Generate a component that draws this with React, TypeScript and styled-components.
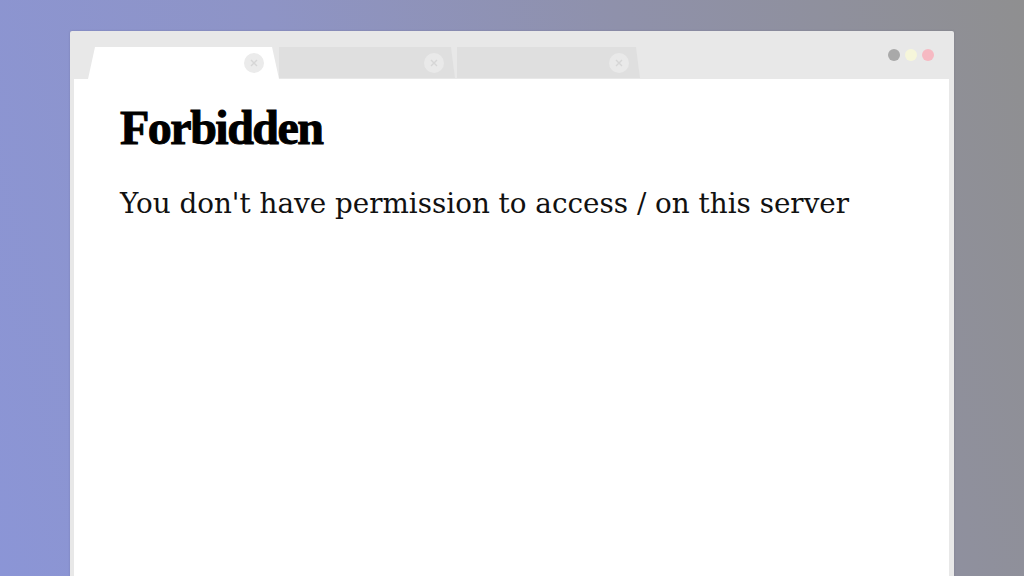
import React from "react";
import styled, { createGlobalStyle } from "styled-components";

const Global = createGlobalStyle`
  html, body { margin: 0; padding: 0; height: 100%; }
  body {
    overflow: hidden;
    background: linear-gradient(75deg, #8b95d6 0%, #8e94c6 35%, #8f91ab 65%, #8f8f90 100%);
  }
  #root { height: 100%; }
`;

const Stage = styled.div`
  width: 1024px;
  height: 576px;
  padding: 31px 70px 0 70px;
  box-sizing: border-box;
  overflow: hidden;
`;

const Frame = styled.div`
  width: 884px;
  height: 560px;
  background: #e8e8e8;
  border-radius: 2px 2px 0 0;
  box-shadow: 0 0 2px rgba(80, 80, 110, 0.35);
  padding: 0 5px 0 4px;
  box-sizing: border-box;
  display: flex;
  flex-direction: column;
`;

const TopBar = styled.div`
  height: 48px;
  display: flex;
  align-items: flex-end;
  justify-content: space-between;
  padding: 0 15px 0 14px;
`;

const Tabs = styled.div`
  display: flex;
  align-items: flex-end;
  height: 32px;
`;

const Tab = styled.div<{ $active?: boolean; $w: number }>`
  position: relative;
  width: ${(p) => p.$w}px;
  height: ${(p) => (p.$active ? 32 : 31)}px;
  background: ${(p) => (p.$active ? "#ffffff" : "#dfdfdf")};
  clip-path: ${(p) =>
    p.$active
      ? "polygon(7px 0, calc(100% - 7px) 0, 100% 100%, 0 100%)"
      : "polygon(0 0, calc(100% - 4px) 0, 100% 100%, 0 100%)"};
  margin-right: ${(p) => (p.$active ? 0 : 2)}px;
  align-self: flex-start;
`;

const Close = styled.span<{ $active?: boolean }>`
  position: absolute;
  right: ${(p) => (p.$active ? 15 : 11)}px;
  top: 6px;
  width: 20px;
  height: 20px;
  border-radius: 50%;
  background: ${(p) => (p.$active ? "#ebebeb" : "#e9e9e9")};
  display: flex;
  align-items: center;
  justify-content: center;
`;

const Dots = styled.div`
  display: flex;
  gap: 5px;
  align-self: flex-start;
  margin-top: 18px;
`;

const Dot = styled.span<{ $c: string }>`
  width: 12px;
  height: 12px;
  border-radius: 50%;
  background: ${(p) => p.$c};
`;

const Content = styled.div`
  flex: 1;
  background: #ffffff;
  padding: 21px 46px 0 46px;
`;

const Title = styled.h1`
  margin: 0;
  font-family: "Liberation Serif", "Times New Roman", serif;
  font-weight: 700;
  font-size: 48px;
  line-height: 56px;
  letter-spacing: -1.5px;
  -webkit-text-stroke: 1px #000;
  color: #000;
`;

const Message = styled.p`
  margin: 30px 0 0 0;
  font-family: "DejaVu Serif", serif;
  font-size: 27.8px;
  line-height: 36px;
  color: #111;
`;

const X = () => (
  <svg width="8" height="8" viewBox="0 0 8 8">
    <path d="M1 1 L7 7 M7 1 L1 7" stroke="#d6d6d6" strokeWidth="1.4" />
  </svg>
);

export default function App() {
  return (
    <>
      <Global />
      <Stage>
        <Frame>
          <TopBar>
            <Tabs>
              <Tab $active $w={191}>
                <Close $active>
                  <X />
                </Close>
              </Tab>
              <Tab $w={176}>
                <Close>
                  <X />
                </Close>
              </Tab>
              <Tab $w={183}>
                <Close>
                  <X />
                </Close>
              </Tab>
            </Tabs>
            <Dots>
              <Dot $c="#a9a9a9" />
              <Dot $c="#f6f6da" />
              <Dot $c="#f6b9c2" />
            </Dots>
          </TopBar>
          <Content>
            <Title>Forbidden</Title>
            <Message>You don't have permission to access / on this server</Message>
          </Content>
        </Frame>
      </Stage>
    </>
  );
}
